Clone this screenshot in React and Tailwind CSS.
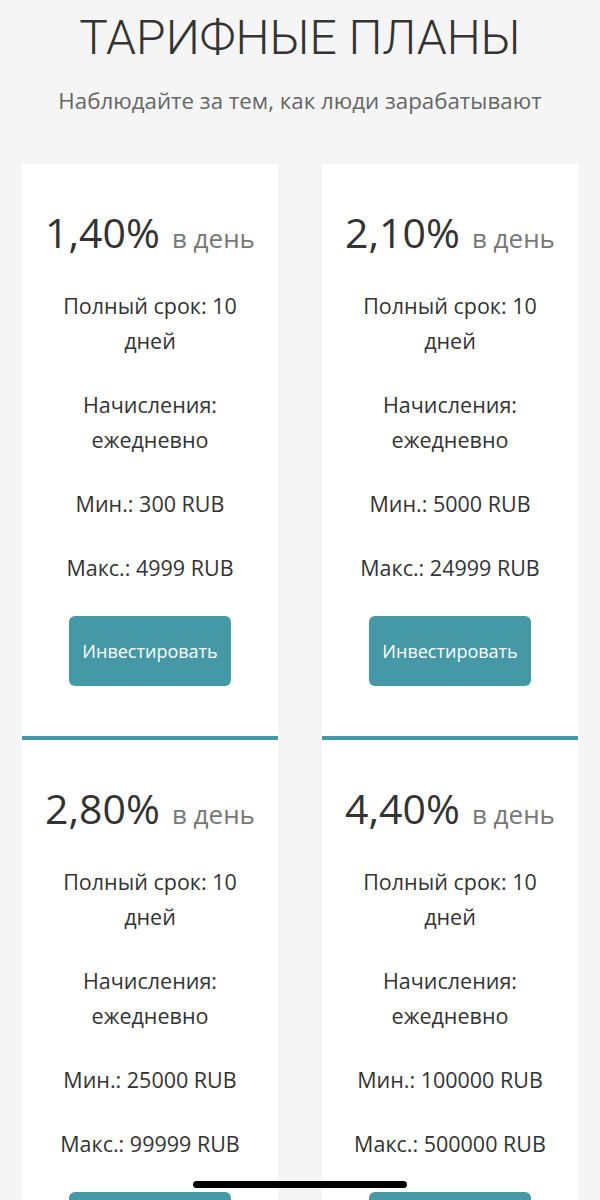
const plans = [
  { rate: "1,40%", min: "300", max: "4999" },
  { rate: "2,10%", min: "5000", max: "24999" },
  { rate: "2,80%", min: "25000", max: "99999" },
  { rate: "4,40%", min: "100000", max: "500000" },
];

function PlanCard({ plan }) {
  return (
    <div className="bg-white border-b-4 border-[#4598a5] flex flex-col items-center text-center pt-[42px] pb-[50px]">
      <div className="text-[#333] leading-[52px] mb-[20px] whitespace-nowrap">
        <span className="text-[41px]">{plan.rate}</span>
        <span className="text-[26px] text-[#777] ml-[12px]">в день</span>
      </div>
      <div className="text-[21.5px] leading-[35px] text-[#333] w-[200px]">
        <p className="mb-[29px]">Полный срок: 10 дней</p>
        <p className="mb-[29px]">Начисления: ежедневно</p>
        <p className="mb-[29px] whitespace-nowrap -mx-4">Мин.: {plan.min} RUB</p>
        <p className="mb-[31px] whitespace-nowrap -mx-4">Макс.: {plan.max} RUB</p>
      </div>
      <button className="w-[162px] h-[70px] rounded-[6px] bg-[#4598a5] text-white text-[18px]">
        Инвестировать
      </button>
    </div>
  );
}

export default function App() {
  return (
    <div
      className="min-h-[1200px] bg-[#f5f5f5] px-[22px]"
      style={{ fontFamily: "'Open Sans', 'Noto Sans', sans-serif" }}
    >
      <h1
        className="text-center text-[48px] font-light text-[#333] leading-[60px] pt-[8px]"
        style={{ fontFamily: "Roboto, sans-serif" }}
      >
        ТАРИФНЫЕ ПЛАНЫ
      </h1>
      <p className="text-center text-[22.3px] text-[#666] mt-[16px] mb-[47px]">
        Наблюдайте за тем, как люди зарабатывают
      </p>
      <div className="grid grid-cols-2 gap-x-[44px]">
        {plans.map((p) => (
          <PlanCard key={p.rate} plan={p} />
        ))}
      </div>
      <div className="fixed left-[193px] top-[1181px] w-[214px] h-[7px] rounded-full bg-black" />
    </div>
  );
}
